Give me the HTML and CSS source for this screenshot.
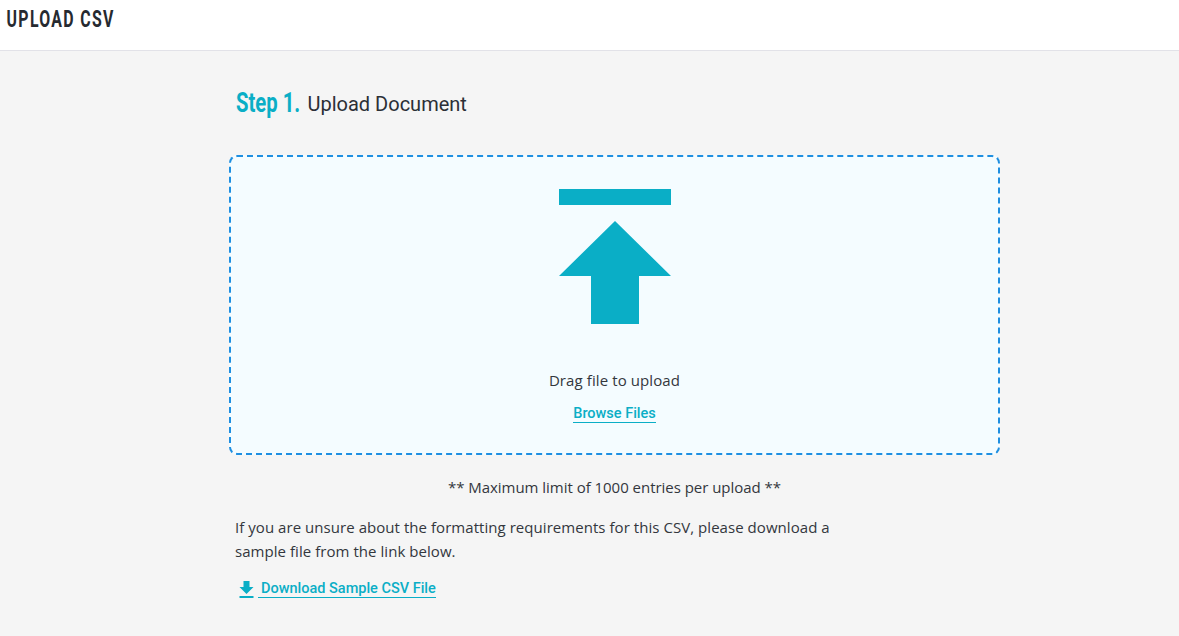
FILE: index.html
```html
<!DOCTYPE html>
<html lang="en">
<head>
    <meta charset="UTF-8">
    <meta name="viewport" content="width=device-width, initial-scale=1.0">
    <title>Upload CSV</title>
    <link rel="stylesheet" href="styles.css">
</head>
<body>
    <header class="page-header">
        <h1>UPLOAD CSV</h1>
    </header>
    <main class="content">
        <h2 class="step-title"><span class="step-num">Step 1.</span> Upload Document</h2>
        <div class="dropzone">
            <svg class="upload-icon" viewBox="0 0 112 135" width="112" height="135" aria-hidden="true">
                <path d="M0 0h112v16H0zM56 32l56 55H80v48H32V87H0z"/>
            </svg>
            <p class="drag-text">Drag file to upload</p>
            <a class="link browse-link" href="#">Browse Files</a>
        </div>
        <p class="limit-note">** Maximum limit of 1000 entries per upload **</p>
        <p class="help-text">If you are unsure about the formatting requirements for this CSV, please download a sample file from the link below.</p>
        <div class="download-row">
            <svg class="download-icon" viewBox="5 3 14 17" width="15" height="17" aria-hidden="true">
                <path d="M19 9h-4V3H9v6H5l7 7 7-7zM5 18v2h14v-2H5z"/>
            </svg>
            <a class="link download-link" href="#">Download Sample CSV File</a>
        </div>
    </main>
</body>
</html>
```

FILE: styles.css
```css
body { margin: 0; background: #f5f5f5; color: #33373d; font-family: "Open Sans", "Noto Sans", sans-serif; font-size: 15px; overflow: hidden; }
p { margin: 0; }
.page-header { height: 50px; background: white; border-bottom: 1px solid #e2e2e8; }
.page-header h1 { margin: 0; padding: 4px 0 0 10px; font-family: Roboto, sans-serif; font-size: 24px; line-height: 30px; font-weight: 700; letter-spacing: 2px; color: #262a30; transform: scaleX(0.66); transform-origin: left; }
.content { width: 771px; margin-left: 229px; padding-top: 33px; }
.step-title { margin: 0 0 0 7px; height: 71px; font-family: Roboto, sans-serif; font-size: 20px; line-height: 36px; font-weight: 400; color: #2b2f36; }
.step-num { display: inline-block; font-size: 27px; font-weight: 700; color: #0aaec6; transform: scaleX(0.75) translateY(1px); transform-origin: left; margin-right: -19px; }
.dropzone { box-sizing: border-box; height: 300px; background: #f4fcff; border: 2px dashed #1e8fe1; border-radius: 8px; display: flex; flex-direction: column; align-items: center; padding-top: 32px; }
.upload-icon { fill: #0aaec6; display: block; }
.drag-text { margin-top: 45px; line-height: 22px; letter-spacing: 0.1px; }
.link { font-family: Roboto, sans-serif; font-size: 14.5px; font-weight: 500; color: #0aaec6; text-decoration: none; border-bottom: 1px solid #0aaec6; line-height: 16px; }
.browse-link { margin-top: 15px; }
.limit-note { margin-top: 21px; text-align: center; line-height: 22px; letter-spacing: -0.03px; }
.help-text { margin: 17px 0 0 6px; width: 600px; line-height: 24px; letter-spacing: 0.05px; }
.download-row { display: flex; align-items: center; margin: 18px 0 0 10px; }
.download-icon { fill: #0aaec6; display: block; }
.download-link { margin-left: 4px; padding-left: 3px; }
```
